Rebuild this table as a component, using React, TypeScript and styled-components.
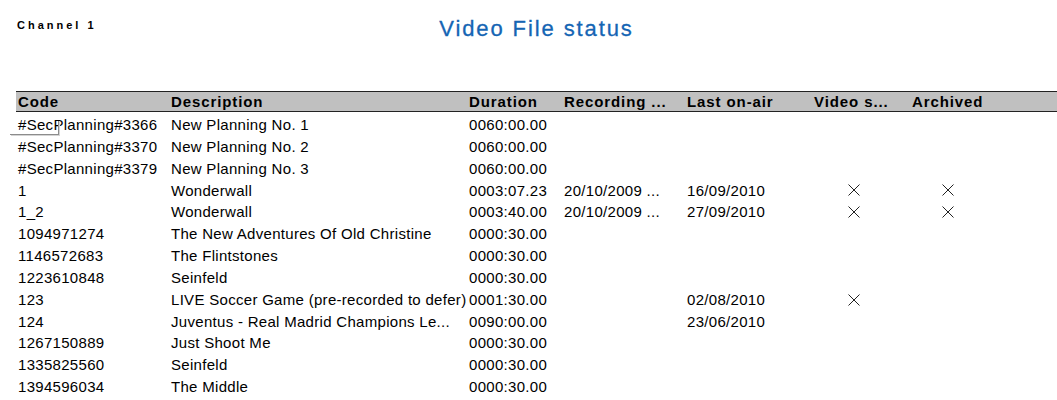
import React from "react";
import styled, { createGlobalStyle } from "styled-components";

const Global = createGlobalStyle`
  html, body { margin: 0; padding: 0; background: #fff; }
  body { font-family: "Liberation Sans", Arial, sans-serif; color: #000; }
`;

const Page = styled.div`
  position: relative;
  box-sizing: border-box;
  width: 1057px;
  padding: 18px 0 0 16px;
`;

const Top = styled.div`
  display: grid;
  grid-template-areas: "a";
  height: 73px;
  align-items: start;
`;

const Channel = styled.div`
  grid-area: a;
  justify-self: start;
  margin-top: 1.5px;
  margin-left: 1px;
  font-size: 11px;
  line-height: 11px;
  font-weight: 700;
  letter-spacing: 3px;
  color: #000;
`;

const Title = styled.h1`
  grid-area: a;
  justify-self: center;
  margin: 0;
  font-size: 22px;
  line-height: 22px;
  font-weight: 400;
  letter-spacing: 1.9px;
  color: #1565b4;
  -webkit-text-stroke: 0.3px #1565b4;
`;

const cols = "153px 298px 95px 123px 127px 98px 1fr";

const HeaderRow = styled.div`
  display: grid;
  grid-template-columns: ${cols};
  height: 19px;
  background: #c0c0c0;
  border-top: 1px solid #222;
  border-bottom: 1px solid #222;
`;

const HeadCell = styled.div`
  padding-left: 2px;
  font-size: 15px;
  line-height: 19px;
  font-weight: 700;
  letter-spacing: 0.9px;
  white-space: nowrap;
  overflow: hidden;
`;

const Body = styled.div`
  padding-top: 2px;
`;

const Row = styled.div`
  display: grid;
  grid-template-columns: ${cols};
  height: 21.85px;
  align-items: center;
`;

const Cell = styled.div`
  padding-left: 2px;
  font-size: 15px;
  line-height: 21.85px;
  letter-spacing: 0.3px;
  white-space: nowrap;
`;

const XCell = styled.div<{ $offset: number }>`
  display: flex;
  align-items: center;
  padding-left: ${(p) => p.$offset}px;
`;

const FocusMark = styled.div`
  position: absolute;
  left: 10px;
  top: 121px;
  width: 48px;
  height: 13px;
  border-right: 1px solid #8c8c8c;
  border-bottom: 1px solid #8c8c8c;
  box-shadow: 1px 1px 0 #d4d4d4;
  pointer-events: none;
`;

const Cross = () => (
  <svg width="12" height="12" viewBox="0 0 12 12">
    <path d="M0.5 0.5 L11.5 11.5 M11.5 0.5 L0.5 11.5" stroke="#222" strokeWidth="1" fill="none" />
  </svg>
);

type R = [string, string, string, string?, string?, boolean?, boolean?];

const rows: R[] = [
  ["#SecPlanning#3366", "New Planning No. 1", "0060:00.00"],
  ["#SecPlanning#3370", "New Planning No. 2", "0060:00.00"],
  ["#SecPlanning#3379", "New Planning No. 3", "0060:00.00"],
  ["1", "Wonderwall", "0003:07.23", "20/10/2009 ...", "16/09/2010", true, true],
  ["1_2", "Wonderwall", "0003:40.00", "20/10/2009 ...", "27/09/2010", true, true],
  ["1094971274", "The New Adventures Of Old Christine", "0000:30.00"],
  ["1146572683", "The Flintstones", "0000:30.00"],
  ["1223610848", "Seinfeld", "0000:30.00"],
  ["123", "LIVE Soccer Game (pre-recorded to defer)", "0001:30.00", "", "02/08/2010", true, false],
  ["124", "Juventus - Real Madrid Champions Le...", "0090:00.00", "", "23/06/2010"],
  ["1267150889", "Just Shoot Me", "0000:30.00"],
  ["1335825560", "Seinfeld", "0000:30.00"],
  ["1394596034", "The Middle", "0000:30.00"],
];

const headers = ["Code", "Description", "Duration", "Recording ...", "Last on-air", "Video s...", "Archived"];

export default function App() {
  return (
    <>
      <Global />
      <Page>
        <Top>
          <Channel>Channel 1</Channel>
          <Title>Video File status</Title>
        </Top>
        <HeaderRow>
          {headers.map((h) => (
            <HeadCell key={h}>{h}</HeadCell>
          ))}
        </HeaderRow>
        <Body>
          {rows.map((r, i) => (
            <Row key={i}>
              <Cell>{r[0]}</Cell>
              <Cell>{r[1]}</Cell>
              <Cell>{r[2]}</Cell>
              <Cell>{r[3] ?? ""}</Cell>
              <Cell>{r[4] ?? ""}</Cell>
              <XCell $offset={36}>{r[5] ? <Cross /> : null}</XCell>
              <XCell $offset={32}>{r[6] ? <Cross /> : null}</XCell>
            </Row>
          ))}
        </Body>
        <FocusMark />
      </Page>
    </>
  );
}
